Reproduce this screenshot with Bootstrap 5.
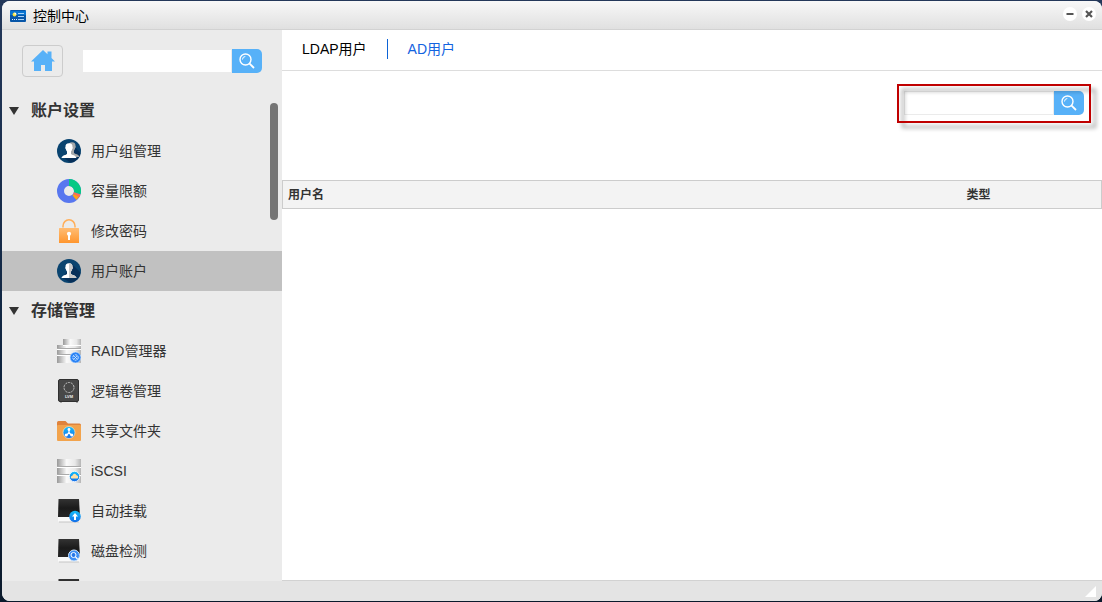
<!DOCTYPE html>
<html lang="zh-CN">
<head>
<meta charset="utf-8">
<meta name="viewport" content="width=device-width, initial-scale=1">
<title>控制中心</title>
<link rel="stylesheet" href="https://cdn.jsdelivr.net/npm/bootstrap@5.3.0/dist/css/bootstrap.min.css">
<style>
  body { font-family: "Liberation Sans", "Noto Sans CJK SC", sans-serif; font-size: 14px; line-height: 20px; color: #333;
    background: linear-gradient(#24385a, #0e2440 60%, #0b1a2c); padding: 1px 0 1px 2px; }
  .window { border-radius: 8px; background: #fff; }
  .titlebar { height: 29px; padding: 0 6px 2px 8px; background: linear-gradient(#f8f8f8, #e0e0e0); border-bottom: 1px solid #d2d2d2; color: #000; }
  .titlebar h1 { font-size: 14px; line-height: 20px; font-weight: 400; margin-left: 7px; }
  .win-btns { gap: 5px; }
  .win-btn { width: 14px; height: 14px; border: 0; border-radius: 50%; background: #fff; padding: 0; display: flex; }
  .sidebar { width: 280px; background: #ebebeb; }
  .fill-rest { min-width: 0; min-height: 0; }
  .side-top { height: 61px; padding: 0 20px; }
  .home-btn { width: 41px; height: 32px; padding: 0; border: 1px solid #ccc; border-radius: 4px; margin-right: 19px; line-height: 1; }
  .search-box { width: 180px; height: 24px; }
  .search-box .form-control { min-height: 0; min-width: 0; height: 24px; padding: 0 6px; border: 1px solid #ebebeb; border-radius: 0; font-size: 13px; }
  .search-box .btn { width: 30px; height: 24px; flex: none; padding: 0; border: 0; border-radius: 0 5px 5px 0; background: #57b1f8; display: flex; align-items: center; justify-content: center; }
  .group-title { height: 40px; padding-left: 7px; gap: 12px; font-size: 16px; font-weight: 700; line-height: 24px; margin: 0; }
  .group-title button { font-weight: inherit; color: inherit; }
  .side-link { height: 40px; padding-left: 55px; gap: 10px; color: #333; text-decoration: none; }
  .side-link.active { background: #c1c1c1; }
  .thumb { position: absolute; right: 4px; top: 12px; width: 8px; height: 117px; border-radius: 4px; background: #757575; }
  .tabs { height: 41px; padding: 0 20px 2px; border-bottom: 1px solid #ddd; }
  .tabs a { color: #1263e0; text-decoration: none; }
  .tabs a.active { color: #000; }
  .tabs .divider { width: 1px; height: 20px; margin: 0 20px; background: #0c63d6; }
  .tools { padding: 13px 11px 57px; }
  .marked { position: relative; padding: 7px 7px 8px; }
  .marked::after { content: ""; position: absolute; inset: 0; border: 2px solid #c00000; pointer-events: none; filter: drop-shadow(5px 5px 2px rgba(0,0,0,.4)); }
  .users { border: 1px solid #ccc; font-size: 12px; line-height: 16px; table-layout: fixed; }
  .users th { background: #f3f3f3; color: #333; height: 28px; padding: 0 5px; vertical-align: middle; border: 0; }
  .users .kind { width: 140px; }
  .statusbar { height: 20px; padding: 0 6px 0 0; background: #e4e4e4; }
  .content { border-bottom: 1px solid #d2d2d2; }
</style>
</head>
<body class="vh-100 overflow-hidden">
<svg class="position-absolute" width="0" height="0" aria-hidden="true">
  <defs>
    <linearGradient id="metal"><stop stop-color="#999"/><stop offset=".4" stop-color="#fafafa"/><stop offset=".75" stop-color="#e8e8e8"/><stop offset="1" stop-color="#b5b5b5"/></linearGradient>
    <linearGradient id="blueBall" x2="0" y2="1"><stop stop-color="#16c0fb"/><stop offset="1" stop-color="#126be8"/></linearGradient>
    <linearGradient id="orange" x2="0" y2="1"><stop stop-color="#ffbd75"/><stop offset="1" stop-color="#ff962e"/></linearGradient>
    <linearGradient id="dark" x2="0" y2="1"><stop stop-color="#333"/><stop offset=".5" stop-color="#1b1b1b"/><stop offset="1" stop-color="#252525"/></linearGradient>
  </defs>
  <symbol id="lens" viewBox="0 0 16 16"><g fill="none" stroke="#fff"><circle cx="6.5" cy="6.5" r="5.5" stroke-width="1.4"/><path d="M3.5 6.5a3 3 0 0 1 2.8-3"/><path d="M10.6 10.6l4.4 4.4" stroke-width="1.8"/></g></symbol>
  <symbol id="person" viewBox="0 0 24 24"><path d="M12 4.2c-2.600 0-3.700 1.600-3.500 3.700-.6.400-.2 1.800.3 2.200.2 1.300.7 2 1.200 2.500v2.400c-.7 1-5.200 1.200-5.500 4.100h15c-.3-2.900-4.800-3.100-5.500-4.100v-2.400c.5-.5 1-1.200 1.200-2.500.5-.4.900-1.800.3-2.200.2-2.100-.9-3.700-3.500-3.700z"/></symbol>
  <symbol id="drive" viewBox="0 0 24 24"><path d="M1.500 0h20.500l1 18H1z" fill="url(#dark)"/><path d="M1 18h22v3.500q0 1.500-1.500 1.500h-19Q1 23 1 21.500z" fill="#f9f9f9"/><path d="M2 23h20" stroke="#c5c5c5"/></symbol>
</svg>

<div class="window h-100 d-flex flex-column overflow-hidden">
  <header class="titlebar d-flex align-items-center flex-shrink-0">
    <svg width="16" height="12" viewBox="0 0 16 12" class="mt-1" aria-hidden="true"><rect width="16" height="12" rx="1" fill="#0756a8"/><path d="M0 1h16v4H0z" fill="#0874d1"/><circle cx="4.500" cy="4.500" r="1.900" fill="#f6e23d"/><path d="M4.500 4.500V2.600a1.900 1.900 0 0 1 1.900 1.900z" fill="#fff"/><path d="M8 3.500h6M8 6.500h6M8 9.500h6" stroke="#a9d2f6"/><path d="M2 9.500h5" stroke="#dff0ff" stroke-dasharray="1 1"/></svg>
    <h1 class="mb-0 mt-1">控制中心</h1>
    <div class="win-btns d-flex ms-auto">
      <button class="win-btn" type="button" aria-label="最小化"><svg width="14" height="14" viewBox="0 0 14 14"><path d="M3.500 7h7" stroke="#555" stroke-width="2"/></svg></button>
      <button class="win-btn" type="button" aria-label="关闭"><svg width="14" height="14" viewBox="0 0 14 14"><path d="M4 4l6 6M10 4l-6 6" stroke="#555" stroke-width="2.200"/></svg></button>
    </div>
  </header>

  <div class="fill-rest d-flex flex-grow-1">
    <aside class="sidebar d-flex flex-column flex-shrink-0">
      <div class="side-top d-flex align-items-center flex-shrink-0">
        <button class="btn home-btn" type="button" aria-label="主页"><svg width="24" height="22" viewBox="0 0 24 22" fill="#57b1f8"><path d="M12 0L0 11.500h3V21h7v-6h4v6h7v-9.500h3L20.500 8V1.500h-4V4.300z"/></svg></button>
        <form class="search-box d-flex">
          <input class="form-control" type="text" aria-label="搜索设置">
          <button class="btn" type="button" aria-label="搜索"><svg width="16" height="16"><use href="#lens"/></svg></button>
        </form>
      </div>
      <div class="fill-rest position-relative flex-grow-1 overflow-hidden">
        <nav aria-label="设置">
          <h2 class="group-title d-flex align-items-center"><svg width="10" height="8" viewBox="0 0 10 8"><path d="M0 0h10L5 8z" fill="#333"/></svg><button class="border-0 bg-transparent p-0" type="button">账户设置</button></h2>
          <a class="side-link d-flex align-items-center" href="#"><svg width="24" height="24" viewBox="0 0 24 24"><circle cx="12" cy="12" r="12" fill="#0a4470"/><path d="M18 8l5.500 6a12 12 0 0 1-10 9.800L6 18z" fill="#07305a"/><use href="#person" x="3" y="-1" width="24" height="24" fill="#a5a8aa"/><use href="#person" width="24" height="24" fill="#fff"/></svg>用户组管理</a>
          <a class="side-link d-flex align-items-center" href="#"><svg width="24" height="24" viewBox="0 0 24 24" fill="none" stroke-width="7"><circle cx="12" cy="12" r="8.500" stroke="#5877ef"/><path d="M12 3.500a8.500 8.500 0 0 1 8.200 10.800" stroke="#06c984"/><path d="M20.200 14.300a8.500 8.500 0 0 1-1.200 2.300" stroke="#ff6f4f"/><path d="M19.200 16.500a8.500 8.500 0 0 1-1.800 2.100" stroke="#ffa313" stroke-width="6"/></svg>容量限额</a>
          <a class="side-link d-flex align-items-center" href="#"><svg width="24" height="24" viewBox="0 0 24 24"><path d="M6 8.500V7a6 6.200 0 0 1 12 0v1.500" fill="none" stroke="#ffae59" stroke-width="1.500"/><rect x="2" y="9" width="20" height="15" rx=".6" fill="url(#orange)"/><circle cx="12" cy="14.800" r="2.100" fill="#fff"/><path d="M11 15h2v6h-2z" fill="#fff"/></svg>修改密码</a>
          <a class="side-link active d-flex align-items-center" href="#" aria-current="page"><svg width="24" height="24" viewBox="0 0 24 24"><circle cx="12" cy="12" r="12" fill="#0a4470"/><path d="M15 5l8.500 8.500a12 12 0 0 1-10 10.300L5.500 19z" fill="#07305a"/><use href="#person" width="24" height="24" fill="#fff"/><path d="M12 4.200c2.600 0 3.700 1.600 3.500 3.700.6.400.2 1.800-.3 2.200-.2 1.300-.7 2-1.200 2.500v2.400c.7 1 5.200 1.200 5.500 4.100H12z" fill="#c9c9c9"/></svg>用户账户</a>

          <h2 class="group-title d-flex align-items-center"><svg width="10" height="8" viewBox="0 0 10 8"><path d="M0 0h10L5 8z" fill="#333"/></svg><button class="border-0 bg-transparent p-0" type="button">存储管理</button></h2>
          <a class="side-link d-flex align-items-center" href="#"><svg width="24" height="24" viewBox="0 0 24 24"><rect x="6" width="18" height="6" fill="url(#metal)"/><rect y="6" width="24" height="18" fill="url(#metal)"/><path d="M0 9.500h24M0 15.500h24" stroke="#aaa"/><path d="M0 10.500h24M0 16.500h24M6 6.500h18" stroke="#fff"/><circle cx="18.500" cy="18.500" r="5.500" fill="#2b83f5" stroke="#e5f3ff" stroke-width=".6"/><g fill="none" stroke="#d8ecff"><circle cx="18.500" cy="18.500" r="2.700" stroke-dasharray="2 1"/><path d="M16.500 20.500l4-4M16.500 16.500l4 4" stroke-width=".8"/></g></svg>RAID管理器</a>
          <a class="side-link d-flex align-items-center" href="#"><svg width="24" height="24" viewBox="0 0 24 24"><path d="M3 22h2v2H3zM19 22h2v2h-2z" fill="#aaa"/><rect x="1.500" y=".5" width="20" height="22" rx="1.500" fill="#484848" stroke="#303030"/><circle cx="12" cy="8.500" r="5" fill="none" stroke="#ccc" stroke-dasharray="2.200 .9" stroke-width=".9"/><text x="12" y="19" font-size="4" font-weight="700" fill="#eee" text-anchor="middle">LVM</text></svg>逻辑卷管理</a>
          <a class="side-link d-flex align-items-center" href="#"><svg width="24" height="24" viewBox="0 0 24 24"><path d="M0 6V3.500Q0 2 1.500 2h7l2.500 2.500h11.500Q24 4.500 24 6v4H0z" fill="#e0833c"/><rect y="6" width="24" height="16" rx="1" fill="#f2a34c"/><circle cx="12" cy="13.500" r="6" fill="url(#blueBall)" stroke="#ffe3bb" stroke-width=".7"/><path d="M12 11v2.500L9.500 16.500M12 13.500l2.500 3" stroke="#fff" stroke-width="1.200" fill="none"/><g fill="#fff"><circle cx="12" cy="10.500" r="1.400"/><circle cx="9.200" cy="16" r="1.500"/><circle cx="14.800" cy="16" r="1.500"/></g></svg>共享文件夹</a>
          <a class="side-link d-flex align-items-center" href="#"><svg width="24" height="24" viewBox="0 0 24 24"><rect width="24" height="24" fill="url(#metal)"/><path d="M0 7.500h24M0 15.500h24" stroke="#aaa"/><path d="M0 8.500h24M0 16.500h24" stroke="#fff"/><circle cx="17.500" cy="17.500" r="5.200" fill="url(#blueBall)" stroke="#fff" stroke-width=".8"/><path d="M14.500 19.500q-1.700-2 .8-2.800 1.800-3.500 4.300-.4 2.500.9 1 3.200z" fill="#ffe0a5"/></svg>iSCSI</a>
          <a class="side-link d-flex align-items-center" href="#"><svg width="24" height="24" viewBox="0 0 24 24"><use href="#drive" width="24" height="24"/><circle cx="18" cy="17.500" r="5.800" fill="url(#blueBall)"/><path d="M18 14l3 3.500h-2V21h-2v-3.500h-2z" fill="#fff"/></svg>自动挂载</a>
          <a class="side-link d-flex align-items-center" href="#"><svg width="24" height="24" viewBox="0 0 24 24"><use href="#drive" width="24" height="24"/><circle cx="17" cy="16.500" r="5.500" fill="#3d8ff5" stroke="#cfe6ff"/><circle cx="16.500" cy="16" r="2.500" fill="#2577e8" stroke="#fff"/><path d="M18.500 18l2 2" stroke="#fff" stroke-width="1.200"/></svg>磁盘检测</a>
          <a class="side-link d-flex align-items-center" href="#" aria-label="磁盘"><svg width="24" height="24" viewBox="0 0 24 24"><use href="#drive" width="24" height="24"/></svg></a>
        </nav>
        <div class="thumb"></div>
      </div>
    </aside>

    <main class="content fill-rest flex-grow-1 d-flex flex-column">
      <nav class="tabs d-flex align-items-center" aria-label="用户类型">
        <a class="active" href="#" aria-current="page">LDAP用户</a>
        <span class="divider"></span>
        <a href="#">AD用户</a>
      </nav>
      <div class="tools d-flex justify-content-end">
        <div class="marked">
          <form class="search-box d-flex">
            <input class="form-control" type="text" aria-label="搜索用户">
            <button class="btn" type="button" aria-label="搜索"><svg width="16" height="16"><use href="#lens"/></svg></button>
          </form>
        </div>
      </div>
      <table class="table users mb-0">
        <thead><tr><th scope="col">用户名</th><th scope="col" class="kind">类型</th></tr></thead>
      </table>
    </main>
  </div>

  <footer class="statusbar d-flex justify-content-end align-items-center flex-shrink-0">
    <svg width="11" height="11" viewBox="0 0 11 11" aria-hidden="true"><path d="M11 0v11H0z" fill="#fff"/></svg>
  </footer>
</div>
<script src="https://cdn.jsdelivr.net/npm/bootstrap@5.3.0/dist/js/bootstrap.bundle.min.js"></script>
</body>
</html>
